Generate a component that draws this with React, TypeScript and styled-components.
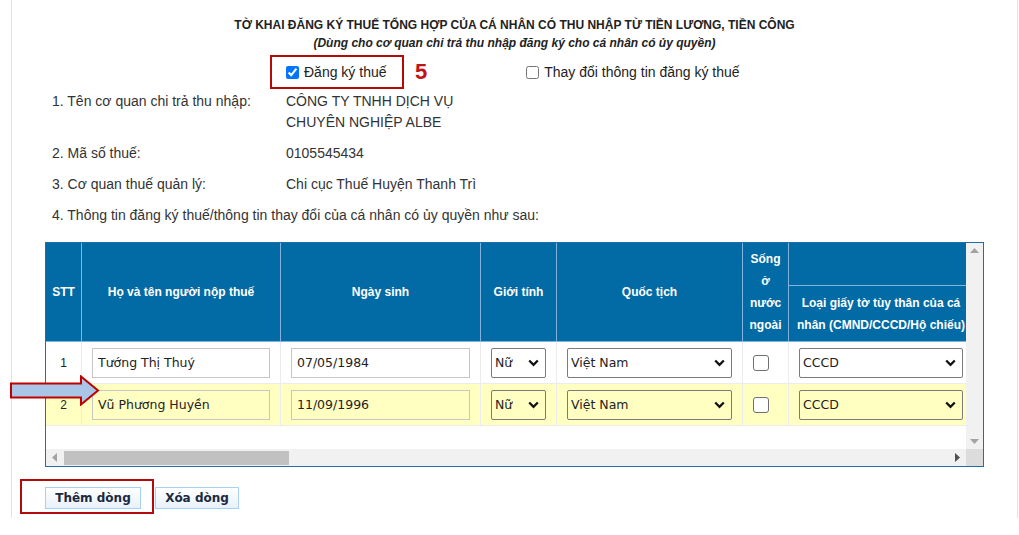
import React from "react";
import styled, { createGlobalStyle } from "styled-components";

const GlobalStyle = createGlobalStyle`
  html, body { margin: 0; padding: 0; background: #ffffff; }
  body { font-family: "Liberation Sans", Arial, sans-serif; color: #333333; }
  * { box-sizing: border-box; }
`;

const Page = styled.div`
  margin-left: 11px;
  width: 1007px;
  height: 518px;
  border-left: 1px solid #d8e6f3;
  border-right: 1px solid #d8e6f3;
  padding-top: 16px;
  display: flex;
  flex-direction: column;
`;

const Title = styled.div`
  text-align: center;
  font-size: 12px;
  font-weight: bold;
  line-height: 18px;
  color: #222222;
`;

const Subtitle = styled(Title)`
  font-style: italic;
`;

const CheckRow = styled.div`
  display: flex;
  align-items: center;
  margin-top: 3px;
  padding-left: 258px;
  height: 34px;
`;

const AnnotBox = styled.div`
  display: flex;
  align-items: center;
  height: 34px;
  width: 134px;
  border: 2px solid #b30b0b;
  padding-left: 14px;
`;

const Option = styled.label<{ $offset?: number }>`
  display: flex;
  align-items: center;
  gap: 5px;
  font-size: 14px;
  color: #222222;
  margin-left: ${(p) => p.$offset ?? 0}px;
`;

const TopCheck = styled.input`
  margin: 0;
  width: 13px;
  height: 13px;
  accent-color: #0075ff;
`;

const StepNumber = styled.span`
  margin-left: 11px;
  font-size: 22px;
  font-weight: bold;
  color: #c0141c;
  font-family: "Liberation Sans", Arial, sans-serif;
`;

const InfoGrid = styled.div`
  margin-top: 2px;
  padding-left: 40px;
  display: grid;
  grid-template-columns: 234px 1fr;
  row-gap: 10px;
  font-size: 14px;
  line-height: 21px;
  color: #333333;
`;

const InfoFull = styled.div`
  grid-column: 1 / span 2;
`;

const TableFrame = styled.div`
  position: relative;
  margin: 16px 33px 0 33px;
  border: 1px solid #1f6fa6;
  display: grid;
  grid-template-columns: 1fr 17px;
  grid-template-rows: 206px 17px;
`;

const Viewport = styled.div`
  overflow: hidden;
`;

const Table = styled.table`
  border-collapse: separate;
  border-spacing: 0;
  table-layout: fixed;
  width: 1078px;
`;

const Col = styled.col<{ $w: number }>`
  width: ${(p) => p.$w}px;
`;

const Th = styled.th<{ $h?: number }>`
  background: #026aa4;
  color: #ffffff;
  font-size: 12px;
  font-weight: bold;
  line-height: 22px;
  padding: 0 3px;
  text-align: center;
  vertical-align: middle;
  border-right: 1px solid #80b4dc;
  border-bottom: 1px solid #80b4dc;
  height: ${(p) => (p.$h ? `${p.$h}px` : "auto")};
`;

const Tr = styled.tr<{ $hl?: boolean }>`
  background: ${(p) => (p.$hl ? "#ffffc2" : "#ffffff")};
`;

const Td = styled.td<{ $center?: boolean }>`
  padding: 5px 10px;
  height: 42px;
  border-right: 1px solid #ececec;
  border-bottom: 1px solid #ececec;
  text-align: ${(p) => (p.$center ? "center" : "left")};
  vertical-align: middle;
  font-size: 12px;
  color: #222222;
`;

const TextInput = styled.input`
  display: block;
  width: 100%;
  height: 30px;
  border: 1px solid #c6c6c6;
  background: transparent;
  padding: 0 5px;
  font-family: "DejaVu Sans", Tahoma, sans-serif;
  font-size: 12.5px;
  color: #222222;
  outline: none;
`;

const SelectWrap = styled.div`
  position: relative;
  height: 30px;
`;

const Select = styled.select`
  appearance: none;
  display: block;
  width: 100%;
  height: 30px;
  border: 1px solid #7b7b7b;
  border-radius: 2px;
  background: transparent;
  padding: 0 20px 0 3px;
  font-family: "DejaVu Sans", Tahoma, sans-serif;
  font-size: 12.5px;
  color: #222222;
  outline: none;
`;

const Chevron = styled.svg`
  position: absolute;
  right: 7px;
  top: 11px;
  pointer-events: none;
`;

const BoxCheck = styled.input`
  appearance: none;
  display: block;
  margin: 0 auto 0 0;
  width: 16px;
  height: 16px;
  border: 1px solid #6f6f6f;
  border-radius: 3px;
  background: #ffffff;
`;

const VScroll = styled.div`
  background: #f1f1f1;
  display: flex;
  flex-direction: column;
  justify-content: space-between;
  align-items: center;
  padding: 5px 0;
`;

const HScroll = styled.div`
  background: #f1f1f1;
  display: flex;
  align-items: center;
`;

const ScrollArrow = styled.div<{ $dark?: boolean }>`
  width: 17px;
  height: 17px;
  display: flex;
  align-items: center;
  justify-content: center;
  color: ${(p) => (p.$dark ? "#505050" : "#a3a3a3")};
`;

const Thumb = styled.div`
  width: 225px;
  height: 14px;
  margin-left: 1px;
  background: #c1c1c1;
`;

const Spacer = styled.div`
  flex: 1;
`;

const Corner = styled.div`
  background: #dcdcdc;
`;

const ArrowMark = styled.svg`
  position: absolute;
  left: -36px;
  top: 132px;
`;

const ButtonRow = styled.div`
  display: flex;
  gap: 14px;
  margin-top: 20px;
  padding-left: 33px;
`;

const ButtonSlot = styled.div`
  position: relative;
`;

const Button = styled.button<{ $w: number }>`
  width: ${(p) => p.$w}px;
  height: 22px;
  border: 1px solid #a6d1f3;
  background: linear-gradient(#ffffff, #e8f1fa);
  font-family: "DejaVu Sans", Tahoma, sans-serif;
  font-weight: bold;
  font-size: 12px;
  color: #1b2a3f;
  padding: 0;
`;

const ButtonMark = styled.div`
  position: absolute;
  left: -25px;
  top: -8px;
  width: 134px;
  height: 35px;
  border: 2px solid #b30b0b;
  pointer-events: none;
`;

const ChevronIcon = () => (
  <Chevron width="11" height="8" viewBox="0 0 11 8">
    <path d="M1.2 1.5 L5.5 5.8 L9.8 1.5" fill="none" stroke="#111" strokeWidth="2.3" />
  </Chevron>
);

type Row = { stt: number; name: string; dob: string; hl?: boolean };

const rows: Row[] = [
  { stt: 1, name: "Tướng Thị Thuý", dob: "07/05/1984" },
  { stt: 2, name: "Vũ Phương Huyền", dob: "11/09/1996", hl: true },
];

const SelectField = ({ value, options }: { value: string; options: string[] }) => (
  <SelectWrap>
    <Select defaultValue={value}>
      {options.map((o) => (
        <option key={o}>{o}</option>
      ))}
    </Select>
    <ChevronIcon />
  </SelectWrap>
);

export default function App() {
  return (
    <>
      <GlobalStyle />
      <Page>
        <Title>TỜ KHAI ĐĂNG KÝ THUẾ TỔNG HỢP CỦA CÁ NHÂN CÓ THU NHẬP TỪ TIỀN LƯƠNG, TIỀN CÔNG</Title>
        <Subtitle>(Dùng cho cơ quan chi trả thu nhập đăng ký cho cá nhân có ủy quyền)</Subtitle>
        <CheckRow>
          <AnnotBox>
            <Option>
              <TopCheck type="checkbox" defaultChecked />
              Đăng ký thuế
            </Option>
          </AnnotBox>
          <StepNumber>5</StepNumber>
          <Option $offset={99}>
            <TopCheck type="checkbox" />
            Thay đổi thông tin đăng ký thuế
          </Option>
        </CheckRow>
        <InfoGrid>
          <div>1. Tên cơ quan chi trả thu nhập:</div>
          <div>
            CÔNG TY TNHH DỊCH VỤ
            <br />
            CHUYÊN NGHIỆP ALBE
          </div>
          <div>2. Mã số thuế:</div>
          <div>0105545434</div>
          <div>3. Cơ quan thuế quản lý:</div>
          <div>Chi cục Thuế Huyện Thanh Trì</div>
          <InfoFull>4. Thông tin đăng ký thuế/thông tin thay đổi của cá nhân có ủy quyền như sau:</InfoFull>
        </InfoGrid>
        <TableFrame>
          <Viewport>
            <Table>
              <colgroup>
                <Col $w={36} />
                <Col $w={199} />
                <Col $w={200} />
                <Col $w={76} />
                <Col $w={186} />
                <Col $w={46} />
                <Col $w={185} />
                <Col $w={150} />
              </colgroup>
              <thead>
                <tr>
                  <Th rowSpan={2}>STT</Th>
                  <Th rowSpan={2}>Họ và tên người nộp thuế</Th>
                  <Th rowSpan={2}>Ngày sinh</Th>
                  <Th rowSpan={2}>Giới tính</Th>
                  <Th rowSpan={2}>Quốc tịch</Th>
                  <Th rowSpan={2}>Sống ở nước ngoài</Th>
                  <Th colSpan={2} $h={43} aria-label="Giấy tờ tùy thân" />
                </tr>
                <tr>
                  <Th $h={56}>Loại giấy tờ tùy thân của cá nhân (CMND/CCCD/Hộ chiếu)</Th>
                  <Th $h={56} aria-label="Số giấy tờ" />
                </tr>
              </thead>
              <tbody>
                {rows.map((r) => (
                  <Tr key={r.stt} $hl={r.hl}>
                    <Td $center>{r.stt}</Td>
                    <Td>
                      <TextInput defaultValue={r.name} />
                    </Td>
                    <Td>
                      <TextInput defaultValue={r.dob} />
                    </Td>
                    <Td>
                      <SelectField value="Nữ" options={["Nam", "Nữ"]} />
                    </Td>
                    <Td>
                      <SelectField value="Việt Nam" options={["Việt Nam", "Khác"]} />
                    </Td>
                    <Td>
                      <BoxCheck type="checkbox" />
                    </Td>
                    <Td>
                      <SelectField value="CCCD" options={["CMND", "CCCD", "Hộ chiếu"]} />
                    </Td>
                    <Td>
                      <TextInput />
                    </Td>
                  </Tr>
                ))}
              </tbody>
            </Table>
          </Viewport>
          <VScroll>
            <svg width="9" height="5" viewBox="0 0 9 5">
              <path d="M0 5 L4.5 0 L9 5 Z" fill="#a3a3a3" />
            </svg>
            <svg width="9" height="5" viewBox="0 0 9 5">
              <path d="M0 0 L4.5 5 L9 0 Z" fill="#a3a3a3" />
            </svg>
          </VScroll>
          <HScroll>
            <ScrollArrow>
              <svg width="5" height="9" viewBox="0 0 5 9">
                <path d="M5 0 L0 4.5 L5 9 Z" fill="currentColor" />
              </svg>
            </ScrollArrow>
            <Thumb />
            <Spacer />
            <ScrollArrow $dark>
              <svg width="5" height="9" viewBox="0 0 5 9">
                <path d="M0 0 L5 4.5 L0 9 Z" fill="currentColor" />
              </svg>
            </ScrollArrow>
          </HScroll>
          <Corner />
          <ArrowMark width="90" height="31" viewBox="0 0 90 31">
            <polygon
              points="1,8.5 71,8.5 71,1.5 88,15.5 71,29.5 71,22.5 1,22.5"
              fill="#a9c6e8"
              stroke="#c00000"
              strokeWidth="2"
            />
          </ArrowMark>
        </TableFrame>
        <ButtonRow>
          <ButtonSlot>
            <Button $w={96}>Thêm dòng</Button>
            <ButtonMark />
          </ButtonSlot>
          <ButtonSlot>
            <Button $w={84}>Xóa dòng</Button>
          </ButtonSlot>
        </ButtonRow>
      </Page>
    </>
  );
}
